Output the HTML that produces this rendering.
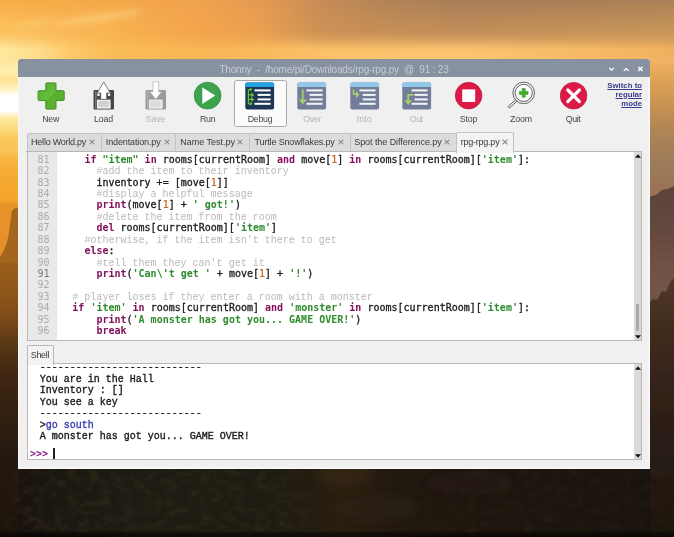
<!DOCTYPE html>
<html><head><meta charset="utf-8"><title>Thonny</title>
<style>
html,body{margin:0;padding:0}
body{width:674px;height:537px;overflow:hidden;position:relative;background:#2a2018;font-family:"Liberation Sans", sans-serif;}
div{position:absolute;white-space:pre}
#win{left:18px;top:59px;width:632px;height:409.500px;background:#f0f0f0;box-shadow:inset -1.500px -1.500px 0 #f9f9f9, inset 1px 0 0 #f9f9f9;border-radius:3px 3px 1px 1px;overflow:hidden}
#tb{left:0;top:0;width:632px;height:18px;background:#87919f}
#title{left:0;width:632px;top:4.500px;text-align:center;font-size:10px;line-height:11px;color:#c6cdd7;letter-spacing:0px}
.ic{position:absolute}
.lbl{top:113px;width:60px;text-align:center;font-size:8.800px;line-height:12px}
#dbg{left:234px;top:80px;width:51px;height:44.700px;border:1px solid #a9a9a9;border-radius:2.500px;background:#fbfbfb}
#sw{left:590px;top:81.700px;width:52px;text-align:right;font-size:7.800px;line-height:8.900px;font-weight:bold;color:#3a3a8e;text-decoration:underline;text-decoration-thickness:0.700px;text-underline-offset:0.800px;white-space:normal}
.tab{top:133px;height:18px;background:#dcdcdc;border:1px solid #c2c2c2;border-bottom:none;border-radius:2px 2px 0 0;box-sizing:content-box}
.tab.act{top:132px;height:20px;background:#f3f3f3;z-index:3}
.tabt{font-size:9px;line-height:11px;color:#3a3a3a;z-index:4}
#ed{left:27px;top:151px;width:615px;height:190px;background:#fff;border:1px solid #bcb8b0;box-sizing:border-box}
#gut{left:28px;top:152px;width:29.300px;height:188px;background:#e9e9e9}
.ln{left:28px;width:21.500px;text-align:right;font-family:"DejaVu Sans Mono", "Liberation Mono", monospace;font-size:10px;line-height:13px;}
.cl{font-family:"DejaVu Sans Mono", "Liberation Mono", monospace;font-size:10px;line-height:13px;color:#1a1a1a;-webkit-text-stroke:0.300px}
.k{color:#84105e;font-weight:bold;-webkit-text-stroke:0}
.s{color:#2e8b2e;font-weight:bold;-webkit-text-stroke:0}
.n{color:#c8641e;-webkit-text-stroke:0.200px #c8641e}
.c{color:#b9b9b9;-webkit-text-stroke:0;font-family:"Liberation Mono", monospace;font-size:10.030px}
.sb{background:#dadada}
#sh{left:27px;top:363px;width:615px;height:97px;background:#fff;border:1px solid #bcb8b0;box-sizing:border-box}
#shtab{left:26.500px;top:345px;width:25px;height:19px;background:#f3f3f3;border:1px solid #b9b9b9;border-bottom:none;border-radius:2px 2px 0 0;z-index:3}
#shtabt{left:30.800px;top:349.500px;font-size:9px;line-height:11px;color:#3a3a3a;z-index:4}
.sl{left:39.800px;font-family:"Liberation Mono", monospace;font-size:10px;line-height:13px;color:#1a1a1a;-webkit-text-stroke:0.350px}
.sl span{letter-spacing:0px}
.inp{color:#3a3ab0}
.pr{color:#8b1a8b;font-family:"DejaVu Sans Mono", "Liberation Mono", monospace;font-weight:bold;-webkit-text-stroke:0}
</style></head>
<body><svg id="bg" width="674" height="537" viewBox="0 0 674 537" style="position:absolute;left:0;top:0"><defs><linearGradient id="gtop" x1="0" y1="0" x2="1" y2="0"><stop offset="0.0000" stop-color="#f8ac48"/><stop offset="0.0890" stop-color="#f7aa48"/><stop offset="0.1632" stop-color="#f6a848"/><stop offset="0.2967" stop-color="#f0a24e"/><stop offset="0.3858" stop-color="#e49a52"/><stop offset="0.4748" stop-color="#c88c56"/><stop offset="0.5638" stop-color="#b48458"/><stop offset="0.6825" stop-color="#a87e58"/><stop offset="1.0000" stop-color="#a88058"/></linearGradient><linearGradient id="gbot" x1="0" y1="0" x2="1" y2="0"><stop offset="0.0000" stop-color="#fee8a0"/><stop offset="0.0593" stop-color="#fddc88"/><stop offset="0.1039" stop-color="#fbca6a"/><stop offset="0.1632" stop-color="#f9bc58"/><stop offset="0.2967" stop-color="#f8b654"/><stop offset="0.3858" stop-color="#f9ba5c"/><stop offset="0.4748" stop-color="#fcc068"/><stop offset="0.6825" stop-color="#fcc470"/><stop offset="0.8902" stop-color="#f6b866"/><stop offset="1.0000" stop-color="#f0b060"/></linearGradient><linearGradient id="gmid" x1="0" y1="0" x2="1" y2="0"><stop offset="0.0000" stop-color="#fcc25e"/><stop offset="0.0890" stop-color="#fab856"/><stop offset="0.1632" stop-color="#f8b352"/><stop offset="0.2226" stop-color="#f6ac4e"/><stop offset="0.2967" stop-color="#f4a44c"/><stop offset="0.3858" stop-color="#eaa050"/><stop offset="0.4748" stop-color="#cc9055"/><stop offset="0.5638" stop-color="#c48e56"/><stop offset="0.6825" stop-color="#c08c58"/><stop offset="1.0000" stop-color="#c69458"/></linearGradient><linearGradient id="gt" x1="0" y1="0" x2="0" y2="1"><stop offset="0.0000" stop-color="#fff" stop-opacity="0"/><stop offset="0.5000" stop-color="#fff" stop-opacity="0"/><stop offset="0.6333" stop-color="#fff" stop-opacity="0.25"/><stop offset="0.7333" stop-color="#fff" stop-opacity="0.65"/><stop offset="0.8333" stop-color="#fff" stop-opacity="1"/><stop offset="1.0000" stop-color="#fff" stop-opacity="1"/></linearGradient><linearGradient id="gt1" x1="0" y1="0" x2="0" y2="1"><stop offset="0.0000" stop-color="#fff" stop-opacity="0"/><stop offset="0.4667" stop-color="#fff" stop-opacity="1"/><stop offset="1.0000" stop-color="#fff" stop-opacity="1"/></linearGradient><mask id="mt"><rect x="0" y="0" width="674" height="60" fill="url(#gt)"/></mask><mask id="mt1"><rect x="0" y="0" width="674" height="60" fill="url(#gt1)"/></mask><linearGradient id="gleft" x1="0" y1="0" x2="0" y2="1"><stop offset="0.0000" stop-color="#fde59a"/><stop offset="0.0230" stop-color="#fff0b0"/><stop offset="0.0439" stop-color="#fde290"/><stop offset="0.0649" stop-color="#fff4c8"/><stop offset="0.0774" stop-color="#ffffff"/><stop offset="0.1088" stop-color="#ffffff"/><stop offset="0.1234" stop-color="#fdeaa0"/><stop offset="0.1485" stop-color="#fcd878"/><stop offset="0.1674" stop-color="#fbc858"/><stop offset="0.1904" stop-color="#fbc458"/><stop offset="0.2113" stop-color="#f8b440"/><stop offset="0.2531" stop-color="#f5a830"/><stop offset="0.2971" stop-color="#f3a42c"/><stop offset="0.3033" stop-color="#e8942a"/><stop offset="0.4121" stop-color="#e48e28"/><stop offset="0.4205" stop-color="#9c601c"/><stop offset="0.5021" stop-color="#8a5418"/><stop offset="0.5460" stop-color="#7a4a18"/><stop offset="0.5879" stop-color="#5e3a16"/><stop offset="0.6297" stop-color="#4a2e14"/><stop offset="0.6695" stop-color="#3e2612"/><stop offset="0.7343" stop-color="#33200f"/><stop offset="0.7971" stop-color="#2a1c10"/><stop offset="0.8368" stop-color="#241810"/><stop offset="1.0000" stop-color="#1c130c"/></linearGradient><linearGradient id="gright" x1="0" y1="0" x2="0" y2="1"><stop offset="0.0000" stop-color="#f2b464"/><stop offset="0.0188" stop-color="#eaac5c"/><stop offset="0.0439" stop-color="#dea254"/><stop offset="0.0858" stop-color="#cc9652"/><stop offset="0.1276" stop-color="#b88a54"/><stop offset="0.1695" stop-color="#a88258"/><stop offset="0.2301" stop-color="#9c7a58"/><stop offset="0.2636" stop-color="#9a7456"/><stop offset="0.2950" stop-color="#987254"/><stop offset="1.0000" stop-color="#987254"/></linearGradient><linearGradient id="ghill" gradientUnits="userSpaceOnUse" x1="0" y1="186" x2="0" y2="537"><stop offset="0.0000" stop-color="#5a4238"/><stop offset="0.1254" stop-color="#64493e"/><stop offset="0.2251" stop-color="#6e5244"/><stop offset="0.2821" stop-color="#705446"/><stop offset="1.0000" stop-color="#705446"/></linearGradient><linearGradient id="gtrees" gradientUnits="userSpaceOnUse" x1="0" y1="278" x2="0" y2="537"><stop offset="0.0000" stop-color="#503828"/><stop offset="0.1236" stop-color="#463022"/><stop offset="0.2394" stop-color="#3e2a1a"/><stop offset="0.4286" stop-color="#33221a"/><stop offset="0.7413" stop-color="#261a12"/><stop offset="1.0000" stop-color="#1c130c"/></linearGradient><linearGradient id="gbottom" x1="0" y1="0" x2="1" y2="0"><stop offset="0.0000" stop-color="#18120e"/><stop offset="0.0593" stop-color="#1b1711"/><stop offset="0.1780" stop-color="#1d1b13"/><stop offset="0.3858" stop-color="#1e1c12"/><stop offset="0.4599" stop-color="#221c11"/><stop offset="0.5119" stop-color="#2a1e10"/><stop offset="0.5935" stop-color="#221911"/><stop offset="0.6825" stop-color="#1f160e"/><stop offset="1.0000" stop-color="#19130e"/></linearGradient><linearGradient id="gbotv" x1="0" y1="0" x2="0" y2="1"><stop offset="0.0000" stop-color="#000" stop-opacity="0"/><stop offset="0.9100" stop-color="#000" stop-opacity="0.0"/><stop offset="0.9550" stop-color="#000" stop-opacity="0.5"/><stop offset="1.0000" stop-color="#000" stop-opacity="0.6"/></linearGradient><radialGradient id="sun" cx="0.5" cy="0.5" r="0.5"><stop offset="0" stop-color="#fff6d0" stop-opacity="0.95"/><stop offset="0.4" stop-color="#fde08a" stop-opacity="0.6"/><stop offset="1" stop-color="#fbc860" stop-opacity="0"/></radialGradient>
<filter id="b05"><feGaussianBlur stdDeviation="0.6"/></filter><filter id="b5"><feGaussianBlur stdDeviation="5"/></filter><filter id="tex" x="0" y="0" width="100%" height="100%" color-interpolation-filters="sRGB"><feTurbulence type="fractalNoise" baseFrequency="0.090 0.130" numOctaves="3" seed="4"/><feColorMatrix type="matrix" values="0 0 0 0 0.200  0 0 0 0 0.170  0 0 0 0 0.095  1.500 0 0 0 -0.620"/></filter><filter id="b1"><feGaussianBlur stdDeviation="1"/></filter><filter id="b3"><feGaussianBlur stdDeviation="3"/></filter><linearGradient id="gtexm" x1="0" y1="0" x2="1" y2="0"><stop offset="0.0000" stop-color="#fff" stop-opacity="0.3"/><stop offset="0.0500" stop-color="#fff" stop-opacity="1"/><stop offset="0.4200" stop-color="#fff" stop-opacity="1"/><stop offset="0.5200" stop-color="#fff" stop-opacity="0.15"/><stop offset="0.6200" stop-color="#fff" stop-opacity="0.15"/><stop offset="0.7000" stop-color="#fff" stop-opacity="0.5"/><stop offset="1.0000" stop-color="#fff" stop-opacity="0.4"/></linearGradient><mask id="mtex"><rect x="0" y="468" width="674" height="69" fill="url(#gtexm)"/></mask></defs><rect width="674" height="537" fill="#2a2018"/><rect x="0" y="0" width="674" height="60" fill="url(#gtop)"/><rect x="0" y="0" width="674" height="60" fill="url(#gmid)" mask="url(#mt1)"/><rect x="0" y="0" width="674" height="60" fill="url(#gbot)" mask="url(#mt)"/><rect x="0" y="59" width="20" height="478" fill="url(#gleft)"/><rect x="648" y="59" width="26" height="478" fill="url(#gright)"/><path d="M648 197 L656 195 L662 190 L668 189 L674 186 V537 H648 Z" fill="url(#ghill)" filter="url(#b05)"/><path d="M648 304 L653 299 L657 300 L662 291 L666 292 L670 282 L674 278 V537 H648 Z" fill="url(#gtrees)" filter="url(#b05)"/><rect x="18" y="466" width="632" height="71" fill="url(#gbottom)"/><rect x="0" y="466" width="674" height="71" fill="url(#gbotv)"/><g filter="url(#b5)"><ellipse cx="345" cy="474" rx="28" ry="14" fill="#3a2812" opacity="0.55"/><ellipse cx="375" cy="508" rx="45" ry="14" fill="#2e2112" opacity="0.45"/><ellipse cx="470" cy="483" rx="45" ry="12" fill="#261c15" opacity="0.35"/></g><g mask="url(#mtex)"><rect x="0" y="468" width="674" height="64" filter="url(#tex)"/></g><g filter="url(#b3)"><ellipse cx="98" cy="18" rx="46" ry="3.500" transform="rotate(-8 98 18)" fill="#fedc8c" opacity="0.55"/><ellipse cx="35" cy="23" rx="22" ry="3" transform="rotate(-10 35 23)" fill="#fdd480" opacity="0.4"/></g><path d="M20 208 L14 208.500 L11.500 212 L11 219 L9.500 228 L8.500 236 L6 245 L3 252 L0 257 V262 H20 Z" fill="#a4661e" filter="url(#b05)"/></svg>
<div id="all" style="left:0;top:0;width:674px;height:537px;will-change:transform">
<div id="win"></div>
<div id="tb" style="left:18px;top:59px;border-radius:3px 3px 0 0"></div>
<div id="title" class="fit" style="left:18px;top:63.500px;letter-spacing:-0.181px;"><span>Thonny  -  /home/pi/Downloads/rpg-rpg.py  @  91 : 23</span></div>
<svg width="40" height="12" viewBox="0 0 40 12" style="position:absolute;left:606px;top:63px"><g fill="none" stroke="#f2f4f7" stroke-width="1.400" stroke-linecap="round" stroke-linejoin="round"><path d="M3.700 5.200 L5.600 7.300 L7.500 5.200"/><path d="M18.200 7.600 L20.200 5.400 L22.200 7.600"/><path d="M32.300 3.700 L36.500 7.900 M36.500 3.700 L32.300 7.900" stroke-linecap="butt" stroke-width="1.600"/></g></svg>
<div id="dbg"></div>
<svg class="ic" style="left:37px;top:82px" width="29" height="28" viewBox="0 0 29 28"><defs><linearGradient id="gp" x1="0" y1="0" x2="1" y2="1"><stop offset="0" stop-color="#55ad2c"/><stop offset="0.480" stop-color="#66be3a"/><stop offset="0.520" stop-color="#58b02e"/><stop offset="1" stop-color="#5ab330"/></linearGradient></defs><path d="M9.8 0.9 H18.0 a1.0 1.0 0 0 1 1.0 1.0 V8.7 H26.2 a1.0 1.0 0 0 1 1.0 1.0 V17.5 a1.0 1.0 0 0 1 -1.0 1.0 H19.0 V26.1 a1.0 1.0 0 0 1 -1.0 1.0 H9.8 a1.0 1.0 0 0 1 -1.0 -1.0 V18.5 H2.1 a1.0 1.0 0 0 1 -1.0 -1.0 V9.7 a1.0 1.0 0 0 1 1.0 -1.0 H8.8 V1.9 a1.0 1.0 0 0 1 1.0 -1.0 Z" fill="url(#gp)" stroke="#3f9126" stroke-width="1"/></svg><svg class="ic" style="left:92.5px;top:81px" width="22" height="30" viewBox="0 0 22 30"><rect x="0.5" y="9" width="20.5" height="19.5" rx="1" fill="#474747"/><rect x="2" y="10" width="1.600" height="17.500" fill="#999" opacity="0.55"/><rect x="4" y="18.600" width="13.600" height="9" fill="#efefef"/><rect x="5.500" y="20.6" width="10.200" height="0.700" fill="#999"/><rect x="5.500" y="22.6" width="10.200" height="0.700" fill="#999"/><rect x="5.500" y="24.6" width="10.200" height="0.700" fill="#999"/><rect x="4.3" y="11" width="2.4" height="4" fill="#efefef"/><rect x="14.8" y="11" width="2.4" height="4" fill="#efefef"/><path d="M10.7 1 L17.3 12 H13.7 V18.4 H7.7 V12 H4.1 Z" fill="#fff" stroke="#474747" stroke-width="0.7"/></svg><svg class="ic" style="left:144.7px;top:81px" width="22" height="30" viewBox="0 0 22 30"><rect x="0.5" y="9" width="20.5" height="19.5" rx="1" fill="#9b9b9b"/><rect x="2" y="10" width="1.600" height="17.500" fill="#bdbdbd" opacity="0.55"/><rect x="4" y="18.600" width="13.600" height="9" fill="#ececec"/><rect x="5.500" y="20.6" width="10.200" height="0.700" fill="#bdbdbd"/><rect x="5.500" y="22.6" width="10.200" height="0.700" fill="#bdbdbd"/><rect x="5.500" y="24.6" width="10.200" height="0.700" fill="#bdbdbd"/><path d="M7.900 0.800 H13.600 V10.800 H16.600 L10.700 18.200 L4.800 10.800 H7.900 Z" fill="#fff" stroke="#b4b4b4" stroke-width="0.700"/></svg><svg class="ic" style="left:193px;top:81px" width="30" height="30" viewBox="0 0 30 30"><circle cx="14.6" cy="14.6" r="13.4" fill="#3da44d" stroke="#2f8a40" stroke-width="0.8"/><path d="M9.3 6.6 L22.3 14.6 L9.3 23 Z" fill="#fff"/></svg><svg class="ic" style="left:245px;top:82px" width="30" height="28" viewBox="0 0 30 28"><rect x="0.3" y="0.5" width="28.8" height="27" rx="2" fill="#1d3655"/><path d="M0.3 5 V2.5 a2 2 0 0 1 2 -2 H27.1 a2 2 0 0 1 2 2 V5 Z" fill="#24a1e2"/><rect x="9.5" y="7.4" width="16.1" height="2" fill="#ffffff"/><rect x="12.6" y="11.9" width="13.000000000000002" height="2" fill="#ffffff"/><rect x="12.6" y="16.4" width="13.000000000000002" height="2" fill="#ffffff"/><rect x="9.5" y="20.8" width="16.1" height="2" fill="#ffffff"/><g fill="none" stroke="#6cc32c" stroke-width="1.2"><path d="M3.4 7.6 V22 M3.4 7.6 H5.5 M3.4 12.9 H7.5 M3.4 17.4 H7.5 M3.4 21.8 H6"/></g>
<g fill="#6cc32c"><path d="M5 5.600 L7.5 7.600 L5 9.600 Z"/><path d="M6.300 10.400 L9.300 12.900 L6.300 15.400 Z"/><path d="M6.300 14.900 L9.300 17.400 L6.300 19.900 Z"/><path d="M5.200 19.800 L7.700 21.800 L5.200 23.800 Z"/></g></svg><svg class="ic" style="left:297.4px;top:82px" width="30" height="28" viewBox="0 0 30 28"><rect x="0.3" y="0.5" width="28.8" height="27" rx="2" fill="#737d99"/><path d="M0.3 5 V2.5 a2 2 0 0 1 2 -2 H27.1 a2 2 0 0 1 2 2 V5 Z" fill="#90c9ec"/><rect x="9.5" y="7.4" width="16.1" height="2" fill="#f3f4f7"/><rect x="12.6" y="11.9" width="13.000000000000002" height="2" fill="#f3f4f7"/><rect x="12.6" y="16.4" width="13.000000000000002" height="2" fill="#f3f4f7"/><rect x="9.5" y="20.8" width="16.1" height="2" fill="#f3f4f7"/><path d="M5.700 7.300 V20" stroke="#a3d06a" stroke-width="1.800" fill="none"/><path d="M1.800 17.600 L5.700 22.400 L9.600 17.600 Z" fill="#a3d06a"/></svg><svg class="ic" style="left:349.6px;top:82px" width="30" height="28" viewBox="0 0 30 28"><rect x="0.3" y="0.5" width="28.8" height="27" rx="2" fill="#737d99"/><path d="M0.3 5 V2.5 a2 2 0 0 1 2 -2 H27.1 a2 2 0 0 1 2 2 V5 Z" fill="#90c9ec"/><rect x="9.5" y="7.4" width="16.1" height="2" fill="#f3f4f7"/><rect x="12.6" y="11.9" width="13.000000000000002" height="2" fill="#f3f4f7"/><rect x="12.6" y="16.4" width="13.000000000000002" height="2" fill="#f3f4f7"/><rect x="9.5" y="20.8" width="16.1" height="2" fill="#f3f4f7"/><path d="M3.600 7.500 V12.300 H6.500" stroke="#a3d06a" stroke-width="1.600" fill="none"/><path d="M6 8.500 L9.200 12.600 L6 16.600 Z" fill="#a3d06a"/></svg><svg class="ic" style="left:401.8px;top:82px" width="30" height="28" viewBox="0 0 30 28"><rect x="0.3" y="0.5" width="28.8" height="27" rx="2" fill="#737d99"/><path d="M0.3 5 V2.5 a2 2 0 0 1 2 -2 H27.1 a2 2 0 0 1 2 2 V5 Z" fill="#90c9ec"/><rect x="9.5" y="7.4" width="16.1" height="2" fill="#f3f4f7"/><rect x="12.6" y="11.9" width="13.000000000000002" height="2" fill="#f3f4f7"/><rect x="12.6" y="16.4" width="13.000000000000002" height="2" fill="#f3f4f7"/><rect x="9.5" y="20.8" width="16.1" height="2" fill="#f3f4f7"/><path d="M11.500 12.900 H6.200 V20" stroke="#a3d06a" stroke-width="1.800" fill="none"/><path d="M2.300 18.300 L6.200 23 L10.100 18.300 Z" fill="#a3d06a"/></svg><svg class="ic" style="left:454px;top:81px" width="30" height="30" viewBox="0 0 30 30"><circle cx="14.600" cy="14.600" r="13.300" fill="#dc1a45" stroke="#b8143a" stroke-width="0.700"/><rect x="8.200" y="8.400" width="13" height="12.600" fill="#fff"/></svg><svg class="ic" style="left:506px;top:80px" width="32" height="30" viewBox="0 0 32 30"><circle cx="17.700" cy="12.900" r="10.800" fill="#f4f4f4" stroke="#5c5c5c" stroke-width="0.950"/><circle cx="17.700" cy="12.900" r="8.600" fill="#fafafa" stroke="#5c5c5c" stroke-width="0.950"/><path d="M16.200 8.500 H19.200 V11.400 H22.100 V14.400 H19.200 V17.300 H16.200 V14.400 H13.300 V11.400 H16.200 Z" fill="#3fae2a" stroke="#2e8a1f" stroke-width="0.500"/><path d="M9.700 19.800 L11.100 21.200 L3.400 28 L2 26.600 Z" fill="#f4f4f4" stroke="#555" stroke-width="0.950"/></svg><svg class="ic" style="left:558.600px;top:81px" width="30" height="30" viewBox="0 0 30 30"><circle cx="14.600" cy="14.700" r="13.300" fill="#dc1a45" stroke="#b8143a" stroke-width="0.700"/><path d="M8.800 9 L20.400 20.600 M20.400 9 L8.800 20.600" stroke="#fff" stroke-width="3.200" stroke-linecap="round"/></svg>
<div class="lbl fit" style="left:20.700000000000003px;color:#444;letter-spacing:-0.203px;"><span>New</span></div><div class="lbl fit" style="left:73.5px;color:#444;letter-spacing:-0.145px;"><span>Load</span></div><div class="lbl fit" style="left:125.5px;color:#b4b4b4;letter-spacing:-0.191px;"><span>Save</span></div><div class="lbl fit" style="left:177.7px;color:#444;letter-spacing:-0.247px;"><span>Run</span></div><div class="lbl fit" style="left:230px;color:#444;letter-spacing:-0.267px;"><span>Debug</span></div><div class="lbl fit" style="left:282px;color:#b4b4b4;letter-spacing:-0.370px;"><span>Over</span></div><div class="lbl fit" style="left:334.2px;color:#b4b4b4;letter-spacing:0.003px;"><span>Into</span></div><div class="lbl fit" style="left:386.2px;color:#b4b4b4;letter-spacing:-0.462px;"><span>Out</span></div><div class="lbl fit" style="left:438.5px;color:#444;letter-spacing:-0.152px;"><span>Stop</span></div><div class="lbl fit" style="left:491px;color:#444;letter-spacing:-0.100px;"><span>Zoom</span></div><div class="lbl fit" style="left:543px;color:#444;letter-spacing:-0.460px;"><span>Quit</span></div>
<div id="sw">Switch to<br>regular<br>mode</div>
<div style="left:26px;top:151px;width:616px;height:1px;background:#bcb8b0"></div>
<div class="tab" style="left:27px;width:72.6px"></div><div class="tabt fit" style="left:31.1px;top:137px;letter-spacing:-0.240px;"><span>Hello World.py</span></div><svg width="6" height="6" viewBox="0 0 7 7" style="position:absolute;z-index:5;left:88.8px;top:139px"><path d="M0.700 0.700 L6.300 6.300 M6.300 0.700 L0.700 6.300" stroke="#f4f4f4" stroke-width="2.200" opacity="0.7"/><path d="M0.700 0.700 L6.300 6.300 M6.300 0.700 L0.700 6.300" stroke="#8c8c8c" stroke-width="1.500"/></svg><div class="tab" style="left:100.6px;width:73.80000000000001px"></div><div class="tabt fit" style="left:105.8px;top:137px;letter-spacing:-0.132px;"><span>Indentation.py</span></div><svg width="6" height="6" viewBox="0 0 7 7" style="position:absolute;z-index:5;left:164.0px;top:139px"><path d="M0.700 0.700 L6.300 6.300 M6.300 0.700 L0.700 6.300" stroke="#f4f4f4" stroke-width="2.200" opacity="0.7"/><path d="M0.700 0.700 L6.300 6.300 M6.300 0.700 L0.700 6.300" stroke="#8c8c8c" stroke-width="1.500"/></svg><div class="tab" style="left:175.4px;width:72.6px"></div><div class="tabt fit" style="left:180.2px;top:137px;letter-spacing:-0.013px;"><span>Name Test.py</span></div><svg width="6" height="6" viewBox="0 0 7 7" style="position:absolute;z-index:5;left:237.39999999999998px;top:139px"><path d="M0.700 0.700 L6.300 6.300 M6.300 0.700 L0.700 6.300" stroke="#f4f4f4" stroke-width="2.200" opacity="0.7"/><path d="M0.700 0.700 L6.300 6.300 M6.300 0.700 L0.700 6.300" stroke="#8c8c8c" stroke-width="1.500"/></svg><div class="tab" style="left:249px;width:99.60000000000002px"></div><div class="tabt fit" style="left:254.6px;top:137px;letter-spacing:-0.160px;"><span>Turtle Snowflakes.py</span></div><svg width="6" height="6" viewBox="0 0 7 7" style="position:absolute;z-index:5;left:337.59999999999997px;top:139px"><path d="M0.700 0.700 L6.300 6.300 M6.300 0.700 L0.700 6.300" stroke="#f4f4f4" stroke-width="2.200" opacity="0.7"/><path d="M0.700 0.700 L6.300 6.300 M6.300 0.700 L0.700 6.300" stroke="#8c8c8c" stroke-width="1.500"/></svg><div class="tab" style="left:349.6px;width:105.79999999999995px"></div><div class="tabt fit" style="left:354.2px;top:137px;letter-spacing:-0.063px;"><span>Spot the Difference.py</span></div><svg width="6" height="6" viewBox="0 0 7 7" style="position:absolute;z-index:5;left:444.2px;top:139px"><path d="M0.700 0.700 L6.300 6.300 M6.300 0.700 L0.700 6.300" stroke="#f4f4f4" stroke-width="2.200" opacity="0.7"/><path d="M0.700 0.700 L6.300 6.300 M6.300 0.700 L0.700 6.300" stroke="#8c8c8c" stroke-width="1.500"/></svg><div class="tab act" style="left:456.400px;width:56px"></div><div class="tabt fit" style="left:460.800px;top:137px;letter-spacing:-0.243px;"><span>rpg-rpg.py</span></div><svg width="6" height="6" viewBox="0 0 7 7" style="position:absolute;z-index:5;left:502.2px;top:139px"><path d="M0.700 0.700 L6.300 6.300 M6.300 0.700 L0.700 6.300" stroke="#f4f4f4" stroke-width="2.200" opacity="0.7"/><path d="M0.700 0.700 L6.300 6.300 M6.300 0.700 L0.700 6.300" stroke="#8c8c8c" stroke-width="1.500"/></svg>
<div id="ed"></div>
<div id="gut"></div>
<div class="sb" style="left:634px;top:152px;width:7px;height:188px"></div>
<div style="left:635.500px;top:304px;width:3.500px;height:27px;background:#a9a9a9;border-radius:1px"></div>
<svg width="6" height="4" viewBox="0 0 5.600 3.200" style="position:absolute;left:634.7px;top:154.2px"><polygon points="0,3.2 2.8,0 5.600,3.200" fill="#111"/></svg><svg width="6" height="4" viewBox="0 0 5.600 3.200" style="position:absolute;left:634.7px;top:334.6px"><polygon points="0,0 5.600,0 2.800,3.200" fill="#111"/></svg>
<div class="ln" style="top:152.80px;color:#ababab">81</div><div class="cl" style="top:152.80px;left:84.38px"><span class="k">if</span> <span class="s">"item"</span> <span class="k">in</span> rooms[currentRoom] <span class="k">and</span> move[<span class="n">1</span>] <span class="k">in</span> rooms[currentRoom][<span class="s">'item'</span>]:</div><div class="ln" style="top:164.22px;color:#ababab">82</div><div class="cl" style="top:164.22px;left:96.42px"><span class="c">#add the item to their inventory</span></div><div class="ln" style="top:175.64px;color:#ababab">83</div><div class="cl" style="top:175.64px;left:96.42px">inventory += [move[<span class="n">1</span>]]</div><div class="ln" style="top:187.06px;color:#ababab">84</div><div class="cl" style="top:187.06px;left:96.42px"><span class="c">#display a helpful message</span></div><div class="ln" style="top:198.48px;color:#ababab">85</div><div class="cl" style="top:198.48px;left:96.42px"><span class="k">print</span>(move[<span class="n">1</span>] + <span class="s">' got!'</span>)</div><div class="ln" style="top:209.90px;color:#ababab">86</div><div class="cl" style="top:209.90px;left:96.42px"><span class="c">#delete the item from the room</span></div><div class="ln" style="top:221.32px;color:#ababab">87</div><div class="cl" style="top:221.32px;left:96.42px"><span class="k">del</span> rooms[currentRoom][<span class="s">'item'</span>]</div><div class="ln" style="top:232.74px;color:#ababab">88</div><div class="cl" style="top:232.74px;left:84.38px"><span class="c">#otherwise, if the item isn't there to get</span></div><div class="ln" style="top:244.16px;color:#ababab">89</div><div class="cl" style="top:244.16px;left:84.38px"><span class="k">else</span>:</div><div class="ln" style="top:255.58px;color:#ababab">90</div><div class="cl" style="top:255.58px;left:96.42px"><span class="c">#tell them they can't get it</span></div><div class="ln" style="top:267.00px;color:#787878">91</div><div class="cl" style="top:267.00px;left:96.42px"><span class="k">print</span>(<span class="s">'Can\'t get '</span> + move[<span class="n">1</span>] + <span class="s">'!'</span>)</div><div class="ln" style="top:278.42px;color:#ababab">92</div><div class="ln" style="top:289.84px;color:#ababab">93</div><div class="cl" style="top:289.84px;left:72.34px"><span class="c"># player loses if they enter a room with a monster</span></div><div class="ln" style="top:301.26px;color:#ababab">94</div><div class="cl" style="top:301.26px;left:72.34px"><span class="k">if</span> <span class="s">'item'</span> <span class="k">in</span> rooms[currentRoom] <span class="k">and</span> <span class="s">'monster'</span> <span class="k">in</span> rooms[currentRoom][<span class="s">'item'</span>]:</div><div class="ln" style="top:312.68px;color:#ababab">95</div><div class="cl" style="top:312.68px;left:96.42px"><span class="k">print</span>(<span class="s">'A monster has got you... GAME OVER!'</span>)</div><div class="ln" style="top:324.10px;color:#ababab">96</div><div class="cl" style="top:324.10px;left:96.42px"><span class="k">break</span></div>
<div id="shtab"></div><div id="shtabt" class="fit" style="letter-spacing:-0.343px;"><span>Shell</span></div>
<div id="sh"></div>
<div class="sb" style="left:634px;top:364px;width:7px;height:95px"></div>
<svg width="6" height="4" viewBox="0 0 5.600 3.200" style="position:absolute;left:634.7px;top:366.2px"><polygon points="0,3.2 2.8,0 5.600,3.200" fill="#111"/></svg><svg width="6" height="4" viewBox="0 0 5.600 3.200" style="position:absolute;left:634.7px;top:453.9px"><polygon points="0,0 5.600,0 2.800,3.200" fill="#111"/></svg>
<div class="sl" style="top:360.90px"><span>---------------------------</span></div><div class="sl" style="top:372.50px">You are in the Hall</div><div class="sl" style="top:384.10px">Inventory : []</div><div class="sl" style="top:395.50px">You see a key</div><div class="sl" style="top:406.70px"><span>---------------------------</span></div><div class="sl" style="top:418.90px">&gt;<span class="inp">go south</span></div><div class="sl" style="top:430.40px">A monster has got you... GAME OVER!</div><div class="sl pr" style="top:446.50px;left:30px">&gt;&gt;&gt;</div><div style="position:absolute;left:53.300px;top:448px;width:1.500px;height:10.500px;background:#222"></div>
</div>
</body></html>
